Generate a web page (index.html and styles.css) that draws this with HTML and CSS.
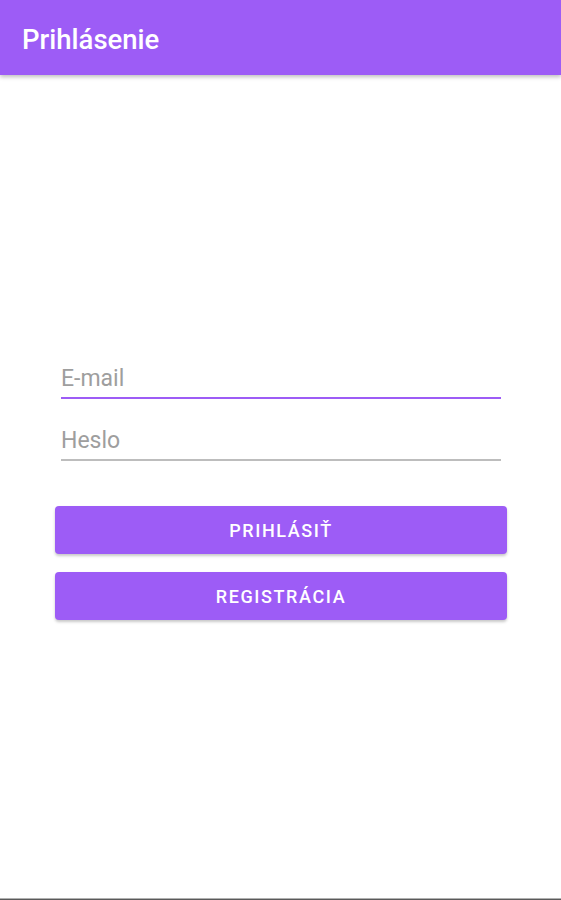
FILE: index.html
```html
<!DOCTYPE html>
<html lang="sk">
<head>
<meta charset="utf-8">
<title>Prihlásenie</title>
<link rel="stylesheet" href="styles.css">
</head>
<body>
<div class="app">
  <header class="appbar"><h1 class="title">Prihlásenie</h1></header>
  <main class="content">
    <form class="form">
      <div class="fields">
        <div class="field field-focused"><span class="placeholder">E-mail</span></div>
        <div class="field"><span class="placeholder">Heslo</span></div>
      </div>
      <div class="buttons">
        <button type="button" class="btn">PRIHLÁSIŤ</button>
        <button type="button" class="btn">REGISTRÁCIA</button>
      </div>
    </form>
  </main>
  <div class="navline"></div>
</div>
</body>
</html>
```
FILE: styles.css
```css
html, body {
  margin: 0;
  padding: 0;
  background: #ffffff;
}
body {
  font-family: Roboto, "Liberation Sans", sans-serif;
}
.app {
  height: 900px;
  display: flex;
  flex-direction: column;
}
.appbar {
  height: 75px;
  box-sizing: border-box;
  background: #9d5cf6;
  box-shadow: 0 2px 4px rgba(0, 0, 0, 0.25);
  padding: 24px 0 0 22px;
  position: relative;
  z-index: 1;
  flex: none;
}
.title {
  margin: 0;
  color: #ffffff;
  font-size: 27.5px;
  font-weight: 500;
  line-height: 32px;
}
.content {
  flex: 1;
}
.form {
  padding: 290px 54px 0 55px;
}
.fields {
  padding: 0 6px;
  display: flex;
  flex-direction: column;
  gap: 28px;
}
.field {
  border-bottom: 2px solid #bdbdbd;
  padding-bottom: 5px;
}
.field-focused {
  border-bottom-color: #9d5cf6;
}
.placeholder {
  display: block;
  font-size: 23px;
  line-height: 27px;
  color: #9e9e9e;
}
.buttons {
  margin-top: 45px;
  display: flex;
  flex-direction: column;
  gap: 18px;
}
.btn {
  height: 48px;
  border: none;
  border-radius: 4px;
  background: #9d5cf6;
  color: #ffffff;
  font-family: Roboto, "Liberation Sans", sans-serif;
  font-size: 18px;
  font-weight: 500;
  letter-spacing: 1.6px;
  box-shadow: 0 2px 3px rgba(0, 0, 0, 0.22);
  padding: 0;
}
.navline {
  height: 2px;
  background: linear-gradient(#b0b0b0 0 1px, #5a5a5a 1px 2px);
  flex: none;
}
```
